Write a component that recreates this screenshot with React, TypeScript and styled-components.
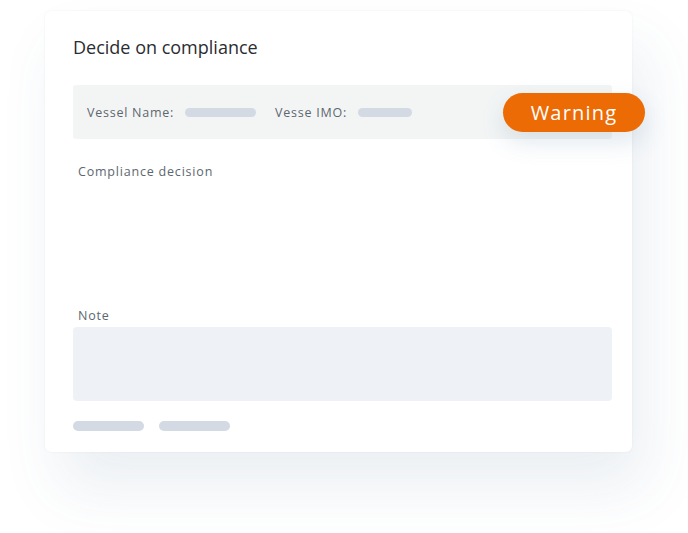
import styled, { createGlobalStyle } from "styled-components";

const GlobalStyle = createGlobalStyle`
  body {
    margin: 0;
    background: #ffffff;
    font-family: "Open Sans", "Noto Sans", sans-serif;
  }
`;

const Page = styled.div`
  width: 688px;
  height: 533px;
  padding: 11px 0 0 45px;
  box-sizing: border-box;
`;

const Card = styled.div`
  width: 587px;
  height: 441px;
  box-sizing: border-box;
  padding: 24px 20px 0 28px;
  background: #ffffff;
  border-radius: 6px;
  box-shadow: 0 0 2px rgba(40, 60, 90, 0.08), 14px 36px 60px rgba(60, 100, 140, 0.1);
  display: flex;
  flex-direction: column;
`;

const Title = styled.h2`
  margin: 0;
  font-size: 18px;
  line-height: 24px;
  font-weight: 500;
  color: #2a2d31;
`;

const InfoBar = styled.div`
  position: relative;
  margin-top: 26px;
  height: 53px;
  border-radius: 3px;
  background: #f3f5f5;
  display: flex;
  align-items: center;
  padding: 1px 14px 0;
  gap: 11px;
`;

const FieldLabel = styled.span<{ $gap?: number }>`
  font-size: 12.5px;
  letter-spacing: 0.75px;
  color: #5d676f;
  margin-left: ${(p) => p.$gap ?? 0}px;
`;

const Placeholder = styled.span<{ $w: number; $h?: number }>`
  display: block;
  width: ${(p) => p.$w}px;
  height: ${(p) => p.$h ?? 9}px;
  border-radius: 5px;
  background: #d3dae3;
`;

const Badge = styled.div`
  position: absolute;
  left: 430px;
  top: 8px;
  width: 142px;
  height: 39px;
  border-radius: 20px;
  background: #ec6b05;
  color: #ffffff;
  font-size: 20px;
  letter-spacing: 1.2px;
  display: flex;
  align-items: center;
  justify-content: center;
  box-shadow: 0 10px 24px rgba(70, 110, 150, 0.16);
`;

const SectionLabel = styled.div<{ $top: number }>`
  margin: ${(p) => p.$top}px 0 0 5px;
  font-size: 12.5px;
  line-height: 18px;
  letter-spacing: 0.8px;
  color: #5d676f;
`;

const NoteBox = styled.div`
  margin-top: 2px;
  height: 74px;
  border-radius: 4px;
  background: #eef2f6;
`;

const Actions = styled.div`
  display: flex;
  gap: 15px;
  margin-top: 20px;
`;

export default function App() {
  return (
    <>
      <GlobalStyle />
      <Page>
        <Card>
          <Title>Decide on compliance</Title>
          <InfoBar>
            <FieldLabel>Vessel Name:</FieldLabel>
            <Placeholder $w={71} />
            <FieldLabel $gap={8}>Vesse IMO:</FieldLabel>
            <Placeholder $w={54} />
            <Badge>Warning</Badge>
          </InfoBar>
          <SectionLabel $top={24}>Compliance decision</SectionLabel>
          <SectionLabel $top={126}>Note</SectionLabel>
          <NoteBox />
          <Actions>
            <Placeholder $w={71} $h={10} />
            <Placeholder $w={71} $h={10} />
          </Actions>
        </Card>
      </Page>
    </>
  );
}
